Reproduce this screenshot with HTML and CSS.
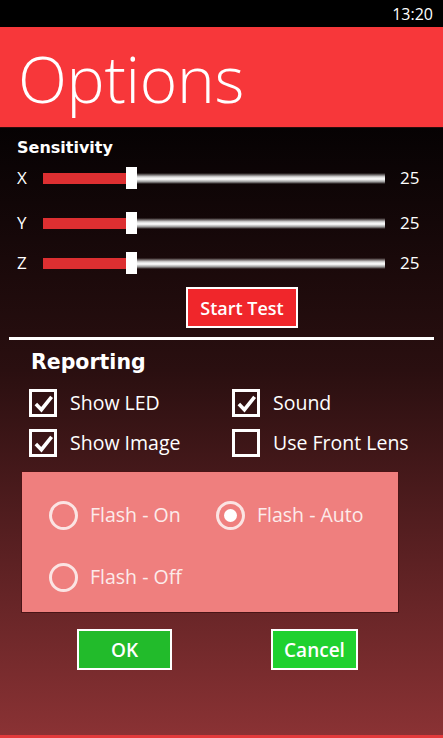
FILE: index.html
```html
<!DOCTYPE html>
<html>
<head>
<meta charset="utf-8">
<link rel="stylesheet" href="styles.css">
</head>
<body>
<div class="phone">
  <div class="status"><span class="time">13:20</span></div>
  <div class="header"><h1 class="title">Options</h1></div>
  <div class="content">
    <h2 class="section-title sens">Sensitivity</h2>
    <div class="slider-row row-x">
      <span class="axis">X</span>
      <div class="track"><div class="fill"></div><div class="thumb"></div><div class="rest"></div></div>
      <span class="value">25</span>
    </div>
    <div class="slider-row row-y">
      <span class="axis">Y</span>
      <div class="track"><div class="fill"></div><div class="thumb"></div><div class="rest"></div></div>
      <span class="value">25</span>
    </div>
    <div class="slider-row row-z">
      <span class="axis">Z</span>
      <div class="track"><div class="fill"></div><div class="thumb"></div><div class="rest"></div></div>
      <span class="value">25</span>
    </div>
    <div class="test-wrap"><button class="btn btn-red">Start Test</button></div>
    <div class="divider"></div>
    <h2 class="section-title rep">Reporting</h2>
    <div class="checks">
      <label class="check"><span class="box"><svg viewBox="0 0 22 22" class="tick"><path d="M3 11.5 L8.8 17.5 L19.5 4" /></svg></span><span class="clabel">Show LED</span></label>
      <label class="check"><span class="box"><svg viewBox="0 0 22 22" class="tick"><path d="M3 11.5 L8.8 17.5 L19.5 4" /></svg></span><span class="clabel">Sound</span></label>
      <label class="check"><span class="box"><svg viewBox="0 0 22 22" class="tick"><path d="M3 11.5 L8.8 17.5 L19.5 4" /></svg></span><span class="clabel">Show Image</span></label>
      <label class="check"><span class="box"></span><span class="clabel">Use Front Lens</span></label>
    </div>
    <div class="panel">
      <div class="radios">
        <label class="radio"><span class="circle"></span><span class="rlabel">Flash - On</span></label>
        <label class="radio"><span class="circle on"></span><span class="rlabel">Flash - Auto</span></label>
        <label class="radio"><span class="circle"></span><span class="rlabel">Flash - Off</span></label>
      </div>
    </div>
    <div class="actions">
      <button class="btn btn-green ok">OK</button>
      <button class="btn btn-green cancel">Cancel</button>
    </div>
  </div>
  <div class="bottom-line"></div>
</div>
</body>
</html>
```
FILE: styles.css
```css
* { box-sizing: border-box; }
html, body { margin: 0; padding: 0; }
body {
  width: 443px;
  height: 738px;
  overflow: hidden;
  background: #000;
  font-family: "Open Sans", "Noto Sans", sans-serif;
  color: #fff;
}
.phone {
  width: 443px;
  height: 738px;
  display: flex;
  flex-direction: column;
}
.status {
  height: 27px;
  background: #000;
  display: flex;
  justify-content: flex-end;
  align-items: center;
  padding-right: 10px;
}
.time {
  font-size: 16px;
  line-height: 16px;
  color: #fff;
}
.header {
  height: 101px;
  background: #f7373a;
  padding: 20px 0 0 18px;
  border-bottom: 1px solid #2a0c0c;
}
.title {
  margin: 0;
  font-weight: 300;
  font-size: 64px;
  line-height: 63px;
  letter-spacing: -0.3px;
  color: #fff;
}
.content {
  flex: 1;
  background: linear-gradient(to bottom, #060203 0%, #2a0f10 40%, #5a2022 70%, #8a3234 100%);
  padding: 10px 0 0 0;
  display: flex;
  flex-direction: column;
}
.section-title {
  margin: 0;
  font-family: "DejaVu Sans", "Lato", sans-serif;
  font-weight: 700;
  color: #fff;
}
.sens {
  font-size: 16px;
  line-height: 20px;
  padding-left: 17px;
}
.rep {
  font-size: 20.5px;
  line-height: 22px;
  padding-left: 31px;
  margin-top: 11px;
}
.slider-row {
  display: flex;
  align-items: center;
  height: 24px;
  padding-left: 17px;
}
.row-x { margin-top: 8px; }
.row-y { margin-top: 21px; }
.row-z { margin-top: 16px; }
.axis {
  width: 26px;
  font-size: 17px;
  line-height: 24px;
  font-weight: 400;
}
.track {
  width: 342px;
  display: flex;
  align-items: center;
  height: 22px;
}
.fill {
  width: 83px;
  height: 11px;
  background: #dd2f31;
}
.thumb {
  width: 11px;
  height: 22px;
  background: #fff;
}
.rest {
  flex: 1;
  height: 11px;
  background: linear-gradient(to bottom, rgba(255,255,255,0) 0%, #d8d8d8 35%, #ffffff 55%, #9a9a9a 80%, rgba(255,255,255,0) 100%);
}
.value {
  margin-left: 15px;
  font-size: 17px;
  line-height: 24px;
}
.test-wrap {
  padding-left: 186px;
  margin-top: 12px;
}
.btn {
  font-family: "Open Sans", "Noto Sans", sans-serif;
  font-weight: 600;
  color: #fff;
  border: 2px solid #fff;
  padding: 0;
  cursor: pointer;
}
.btn-red {
  width: 112px;
  height: 41px;
  background: #f0262b;
  font-size: 18px;
}
.divider {
  margin: 9px 9px 0 9px;
  height: 3px;
  background: #fff;
}
.checks {
  display: grid;
  grid-template-columns: 203px auto;
  row-gap: 12px;
  padding-left: 29px;
  margin-top: 16px;
}
.check {
  display: flex;
  align-items: center;
  height: 28px;
}
.box {
  width: 28px;
  height: 28px;
  border: 3px solid #fff;
  display: flex;
  align-items: center;
  justify-content: center;
  flex: none;
}
.tick {
  width: 21px;
  height: 21px;
  fill: none;
  stroke: #fff;
  stroke-width: 3.8;
  stroke-linecap: butt;
  stroke-linejoin: miter;
}
.clabel {
  margin-left: 13px;
  font-size: 19.5px;
  line-height: 28px;
  color: #fff;
}
.panel {
  margin: 14px 0 0 21px;
  width: 378px;
  height: 142px;
  background: #ef7f7e;
  border: 1px solid #4a1416;
  padding: 29px 0 0 27px;
}
.radios {
  display: grid;
  grid-template-columns: 167px auto;
  row-gap: 34px;
}
.radio {
  display: flex;
  align-items: center;
  height: 28px;
}
.circle {
  width: 29px;
  height: 29px;
  border: 3px solid #fbe4e3;
  border-radius: 50%;
  display: flex;
  align-items: center;
  justify-content: center;
  flex: none;
}
.circle.on::after {
  content: "";
  width: 13px;
  height: 13px;
  border-radius: 50%;
  background: #fff;
}
.rlabel {
  margin-left: 12px;
  font-size: 19.5px;
  line-height: 28px;
  color: #fcebea;
}
.actions {
  display: flex;
  margin-top: 16px;
  padding-left: 77px;
}
.btn-green {
  height: 41px;
  font-size: 19px;
}
.ok {
  width: 95px;
  background: #22bb2b;
}
.cancel {
  width: 87px;
  margin-left: 99px;
  background: #1fd12f;
}
.bottom-line {
  height: 3px;
  background: #e33a3c;
}
```
